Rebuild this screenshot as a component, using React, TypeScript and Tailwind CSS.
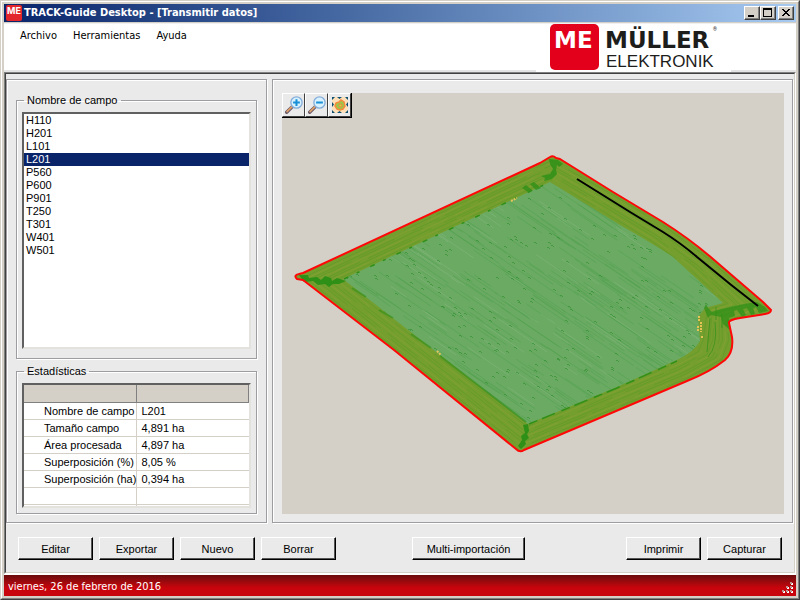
import { useState } from 'react';
import type { ReactNode } from 'react';

const FIELDS = ['H110', 'H201', 'L101', 'L201', 'P560', 'P600', 'P901', 'T250', 'T301', 'W401', 'W501'];

const STATS = [
  ['Nombre de campo', 'L201'],
  ['Tamaño campo', '4,891 ha'],
  ['Área procesada', '4,897 ha'],
  ['Superposición (%)', '8,05 %'],
  ['Superposición (ha)', '0,394 ha'],
];

type Point = [number, number];

// headland: outer edge and the matching point on the worked area
const OUTER: Point[] = [[300, 277], [552, 158], [613, 192], [663, 222], [713, 259], [768, 310], [729, 322], [732, 340], [725, 360], [687, 381], [520, 450]];
const INNER: Point[] = [[343, 279], [550, 182], [606, 216], [650, 243], [685, 268], [723, 303], [705, 308], [700, 340], [695, 351], [675, 361], [528, 424]];

const OUTLINE =
  'M297 279 Q293 275 299 274 L303 273 L540 163 L550 157 Q553 155 556 158 L560 159 L613 192 L663 222 Q690 239 713 259 L763 302 L771 310 Q771 313 765 314 L740 318 Q728 320 729 323 L732 337 Q734 352 725 360 Q710 372 687 381 L524 450 Q520 453 516 449 L394 350 L303 280 Z';
const AREA =
  'M343 279 L550 182 L620 225 Q652 243 673 257 L723 303 L705 308 L698 317 L700 341 Q694 352 677 360 L617 387 L528 424 L440 355 Z';

const random = (seed: number) => {
  let s = seed;
  return () => {
    s = (s * 16807) % 2147483647;
    return s / 2147483647;
  };
};

const ring = (t: number) =>
  OUTER.map(([x, y], i) => `${x + (INNER[i][0] - x) * t},${y + (INNER[i][1] - y) * t}`).join(' ');

const streaks = (seed: number, count: number, max: number) => {
  const next = random(seed);
  return Array.from({ length: count }, () => {
    const x = 330 + next() * 380;
    const y = 180 + next() * 245;
    const l = 12 + next() * max;
    return `M${x.toFixed(1)} ${y.toFixed(1)}l${l.toFixed(1)} ${(l * 0.68).toFixed(1)}`;
  }).join('');
};

const speckles = (seed: number, count: number) => {
  const next = random(seed);
  return Array.from({ length: count }, () => {
    const x = Math.round(340 + next() * 380);
    const y = Math.round(180 + next() * 245);
    return `M${x} ${y + 0.5}h2m0 1h1`;
  }).join('');
};

const RINGS = [0.1, 0.2, 0.3, 0.4, 0.5, 0.6, 0.7, 0.8, 0.9];

const FieldMap = () => (
  <svg viewBox="282 93 502 421" className="block w-full h-full" role="img" aria-label="L201">
    <defs>
      <clipPath id="area">
        <path d={AREA} />
      </clipPath>
    </defs>
    <path d={OUTLINE} fill="#749e2e" />
    {RINGS.map((t, i) => (
      <polygon
        key={t}
        points={ring(t)}
        fill="none"
        stroke={i % 3 === 1 ? '#8ea338' : '#559a24'}
        strokeWidth="1"
        strokeDasharray={i % 2 ? '38 9 70 14' : '90 20 30 6'}
        opacity="0.45"
      />
    ))}
    <path d={AREA} fill="#6aaa63" />
    <g clipPath="url(#area)" fill="none">
      <path d={streaks(71, 330, 55)} stroke="#4b9f48" strokeWidth="0.7" opacity="0.6" />
      <path d={streaks(913, 90, 40)} stroke="#8fbc86" strokeWidth="0.7" opacity="0.6" />
      <path d={speckles(4021, 420)} stroke="#2f9030" strokeWidth="1" opacity="0.65" />
    </g>
    {/* overlaps along the headland */}
    <g fill="none" stroke="#2f9018">
      <path d="M344 279L550 182" strokeWidth="1.5" strokeDasharray="5 9 3 12" />
      <path d="M352 288l14 9M379 310l14 8M411 334l20 14M440 356l86 66" strokeWidth="2" opacity="0.6" />
      <path d="M529 424L617 388L677 361" strokeWidth="1.5" strokeDasharray="9 5 14 7" />
      <path d="M716 320v-13M722 328v-14M710 318l-3 34M715 322q3 24-7 35" strokeWidth="1" opacity="0.7" />
    </g>
    <g fill="#2f9018">
      <path d="M299 275l9 0 1 3 8-1 4 3 4-4 6 2 1 3 5-3 9 3-7 3-6 0-4 3-4-3-7 1-5-4-9 1z" />
      <path d="M549 159l9 1 5 4-4 3-2-2-1 5 1 4-5 5-8 2 1-3-4-2 9-2 3-5-3-5z" opacity="0.85" />
      <path d="M522 188l4-3 6 5-4 2zM530 184l4-2 7 6-5 2z" opacity="0.8" />
      <path d="M704 308l2-4 2 4 4 4 10-3 22-5 13-2 8 5 3 4-9 2-3-6-3 1 2 6-4 1-4-7-4 1 3 6-4 2-5-7-3 1 1 5-6 2 2 13-8-7-2-7-10-2-3 3z" opacity="0.75" />
      <path d="M523 425l5-1 1 7-2 3 2 4-4 3 1 3-5 5-3-3 4-6-1-4 4-3z" />
    </g>
    <path d="M699 316v6M701 322v10M698 326v5M702 336v3M437 351l4 4M511 201l6-3" stroke="#e5c457" strokeWidth="2" strokeDasharray="2 1" fill="none" />
    <path d={OUTLINE} fill="none" stroke="#ff0808" strokeWidth="2" strokeLinejoin="round" />
    <path d="M577 179L630 212L663 232Q682 244 697 257L730 284L758 306" fill="none" stroke="#000" strokeWidth="2" strokeLinejoin="round" />
  </svg>
);

const Magnifier = ({ plus }: { plus?: boolean }) => (
  <svg viewBox="0 0 16 16" width="18" height="18" aria-hidden="true">
    <path d="M1.5 14.5L7 9" stroke="#6b5b6a" strokeWidth="3" strokeLinecap="round" />
    <path d="M1.8 13.8L6.5 9.3" stroke="#e0a068" strokeWidth="1.5" strokeLinecap="round" />
    <circle cx="10.2" cy="5.8" r="5" fill="#d8f1ff" stroke="#85aedb" strokeWidth="1.2" />
    <path d={plus ? 'M7.2 5.8h6M10.2 2.8v6' : 'M7.2 5.8h6'} stroke="#188fd6" strokeWidth="1.8" />
  </svg>
);

const FitField = () => (
  <svg viewBox="0 0 16 16" width="16" height="16" aria-hidden="true">
    <rect width="16" height="16" fill="#ffe0b8" />
    <path d="M4 6l3-1 2-2 3 2 1 4-2 3-3 1-3-1-2-3z" fill="#9cc84c" stroke="#f58a3c" strokeWidth="1.5" />
    <circle cx="8.500" cy="8.500" r="1.5" fill="#c9d94a" stroke="#f0803c" />
    <path d="M0 0h3L0 3zM16 0v3l-3-3zM0 16v-3l3 3zM16 16h-3l3-3zM5 0h5L7.500 2zM5 16h5l-2.500-2zM0 5v5l2-2.500zM16 5v5l-2-2.500z" fill="#0d4f73" />
  </svg>
);

const Logo = () => (
  <svg viewBox="0 0 195 48" className="block w-[195px] h-12 bg-white" role="img" aria-label="Müller Elektronik">
    <rect x="14" y="0" width="49" height="46" rx="5" fill="#e2001a" />
    <text x="18" y="24" fontFamily="'DejaVu Sans', sans-serif" fontWeight="700" fontSize="23" fill="#fff">ME</text>
    <text x="69" y="24" fontFamily="'DejaVu Sans', sans-serif" fontWeight="700" fontSize="23" fill="#1d1d1b">MÜLLER</text>
    <text x="70" y="43" fontFamily="'Liberation Sans', sans-serif" fontSize="17" fill="#1d1d1b">ELEKTRONIK</text>
    <text x="177" y="7" fontFamily="Roboto, sans-serif" fontSize="5" fill="#1d1d1b">®</text>
  </svg>
);

const CaptionButton = ({ label, children }: { label: string; children: ReactNode }) => (
  <button
    aria-label={label}
    className="w-4 h-3.5 bg-[#d4d0c8] border border-t-white border-l-white border-r-[#404040] border-b-[#404040] shadow-[inset_-1px_-1px_0_#808080] flex items-center justify-center"
  >
    <svg viewBox="0 0 12 10" width="12" height="10" fill="none" stroke="#000" shapeRendering="crispEdges">
      {children}
    </svg>
  </button>
);

const ToolButton = ({ label, children }: { label: string; children: ReactNode }) => (
  <button
    aria-label={label}
    className="w-[23px] h-6 bg-[#eaeaea] border border-t-white border-l-white border-r-[#404040] border-b-[#404040] flex items-center justify-center"
  >
    {children}
  </button>
);

const Button = ({ children, className = 'w-[75px]' }: { children: ReactNode; className?: string }) => (
  <button
    className={`${className} h-[23px] shrink-0 bg-[#eaeaea] border border-t-white border-l-white border-r-black border-b-black shadow-[inset_-1px_-1px_0_#555]`}
  >
    {children}
  </button>
);

const Group = ({ title, className, children }: { title: string; className: string; children: ReactNode }) => (
  <fieldset
    className={`${className} min-w-0 border border-[#9d9da1] shadow-[1px_1px_0_#fff,inset_1px_1px_0_#fff] px-[5px] flex flex-col`}
  >
    <legend className="ml-[2px] px-[3px] leading-[14px]">{title}</legend>
    {children}
  </fieldset>
);

const App = () => {
  const [field, setField] = useState('L201');

  return (
    <div className="min-h-screen flex flex-col border border-t-[#d4d0c8] border-l-[#d4d0c8] border-r-[#404040] border-b-[#404040] font-['Liberation_Sans',Arial,sans-serif] text-[11px] leading-[14px] text-black">
      <div className="flex-1 flex flex-col border border-t-white border-l-white border-r-[#808080] border-b-[#808080] bg-[#d4d0c8] p-0.5">
        <div className="h-[18px] mb-px px-0.5 flex items-center bg-linear-to-r from-[#0a246a] to-[#a6caf0]">
          <svg viewBox="0 0 16 16" width="16" height="16" aria-hidden="true">
            <rect width="16" height="16" rx="2" fill="#e3262c" />
            <text x="1" y="9" fontFamily="Inter, sans-serif" fontWeight="700" fontSize="9" fill="#fff">ME</text>
          </svg>
          <h1 className="ml-0.5 flex-1 font-['DejaVu_Sans_Condensed','DejaVu_Sans',sans-serif] font-bold text-[11px] text-white whitespace-nowrap">
            TRACK-Guide Desktop - [Transmitir datos]
          </h1>
          <CaptionButton label="Minimizar">
            <path d="M2 8h6" strokeWidth="2" />
          </CaptionButton>
          <CaptionButton label="Maximizar">
            <path d="M1.5 1v8M9.500 1v8M1 8.500h9" />
            <path d="M1 1h9" strokeWidth="2" />
          </CaptionButton>
          <div className="w-0.5" />
          <CaptionButton label="Cerrar">
            <path d="M2 1l7 7M9 1l-7 7" strokeWidth="1" />
            <path d="M3 1l7 7M10 1l-7 7" strokeWidth="1" />
          </CaptionButton>
        </div>

        <header className="h-[49px] bg-white border-t border-b-2 border-t-[#f0f0f0] border-b-[#e4e4e4] flex justify-between">
          <nav className="pt-[5px] pl-4 flex items-start gap-4 font-['DejaVu_Sans_Condensed','DejaVu_Sans',sans-serif]">
            <button>Archivo</button>
            <button>Herramientas</button>
            <button>Ayuda</button>
          </nav>
          <div className="mr-[65px]">
            <Logo />
          </div>
        </header>

        <div className="flex-1 flex flex-col border border-t-[#808080] border-l-[#808080] border-r-white border-b-white">
          <main className="flex-1 flex flex-col border border-t-[#404040] border-l-[#404040] border-r-[#d4d0c8] border-b-[#d4d0c8] bg-[#eaeaea]">
            <div className="flex-1 flex gap-[5px] pt-[5px] pr-px">
              <section className="w-[261px] shrink-0 border border-[#9d9da1] shadow-[1px_1px_0_#fff,inset_1px_1px_0_#fff] px-[9px] pt-[13px] pb-2 flex flex-col gap-[5px]">
                <Group title="Nombre de campo" className="flex-1 pb-[9px]">
                  <select
                    size={11}
                    aria-label="Nombre de campo"
                    value={field}
                    onChange={e => setField(e.target.value)}
                    className="appearance-none mt-[5px] flex-1 w-full bg-white rounded-none outline-none border-2 border-t-[#606060] border-l-[#606060] border-r-[#e4e2dc] border-b-[#e4e2dc] p-0 overflow-hidden"
                  >
                    {FIELDS.map(f => (
                      <option
                        key={f}
                        value={f}
                        className="min-h-0 h-[13px] p-0 pl-0.5 leading-[13px] text-black checked:bg-[linear-gradient(#0a246a,#0a246a)] checked:[-webkit-text-fill-color:white]"
                      >
                        {f}
                      </option>
                    ))}
                  </select>
                </Group>

                <Group title="Estadísticas" className="pb-[5px]">
                  <div className="mt-[5px] bg-white border-2 border-t-[#606060] border-l-[#606060] border-r-[#e4e2dc] border-b-[#e4e2dc]">
                    <table className="w-full table-fixed border-collapse">
                      <thead>
                        <tr className="h-[17px] bg-[#d4d0c8]">
                          <th className="w-[112px] border-r border-b border-[#808080]" />
                          <th className="border-r border-b border-[#808080]" />
                        </tr>
                      </thead>
                      <tbody>
                        {STATS.map(([name, value]) => (
                          <tr key={name} className="h-[17px] border-b border-[#d4d0c8]">
                            <td className="p-0 pl-5 whitespace-nowrap border-r border-[#d4d0c8]">{name}</td>
                            <td className="p-0 pl-[5px]">{value}</td>
                          </tr>
                        ))}
                        <tr className="h-[17px] border-b border-[#d4d0c8]">
                          <td className="border-r border-[#d4d0c8]" />
                          <td />
                        </tr>
                        <tr className="h-0.5">
                          <td className="p-0 border-r border-[#d4d0c8]" />
                          <td className="p-0" />
                        </tr>
                      </tbody>
                    </table>
                  </div>
                </Group>
              </section>

              <section className="flex-1 min-w-0 border border-[#9d9da1] shadow-[1px_1px_0_#fff,inset_1px_1px_0_#fff] pl-[9px] pr-2 pt-[13px] pb-2 flex">
                <div className="relative flex-1 bg-[#d4d0c8]">
                  <FieldMap />
                  <div className="absolute top-0 left-0 flex border-r border-b border-black">
                    <ToolButton label="Acercar">
                      <Magnifier plus />
                    </ToolButton>
                    <ToolButton label="Alejar">
                      <Magnifier />
                    </ToolButton>
                    <ToolButton label="Ajustar">
                      <FitField />
                    </ToolButton>
                  </div>
                </div>
              </section>
            </div>

            <div className="flex gap-1.5 pt-3.5 pb-3 px-3">
              <Button>Editar</Button>
              <Button>Exportar</Button>
              <Button>Nuevo</Button>
              <Button>Borrar</Button>
              <Button className="w-[113px] ml-[70px]">Multi-importación</Button>
              <Button className="w-[75px] ml-auto">Imprimir</Button>
              <Button>Capturar</Button>
            </div>
          </main>
        </div>

        <footer className="h-[22px] border-t border-white bg-linear-to-b from-[#6b0a0c] to-[#c8040c] to-60% bg-clip-padding text-white flex items-center justify-between pl-1 font-['DejaVu_Sans_Condensed','DejaVu_Sans',sans-serif]">
          <span className="pt-0.5">viernes, 26 de febrero de 2016</span>
          <svg viewBox="0 0 12 12" width="12" height="12" className="self-end mr-0.5 mb-0.5" fill="#fff" shapeRendering="crispEdges" aria-hidden="true">
            <path d="M9 1h2v2H9zM5 5h2v2H5zM9 5h2v2H9zM1 9h2v2H1zM5 9h2v2H5zM9 9h2v2H9z" />
            <path d="M8 0h2v2H8zM4 4h2v2H4zM8 4h2v2H8zM0 8h2v2H0zM4 8h2v2H4zM8 8h2v2H8z" fill="#b8938f" />
          </svg>
        </footer>
      </div>
    </div>
  );
};

export default App;
